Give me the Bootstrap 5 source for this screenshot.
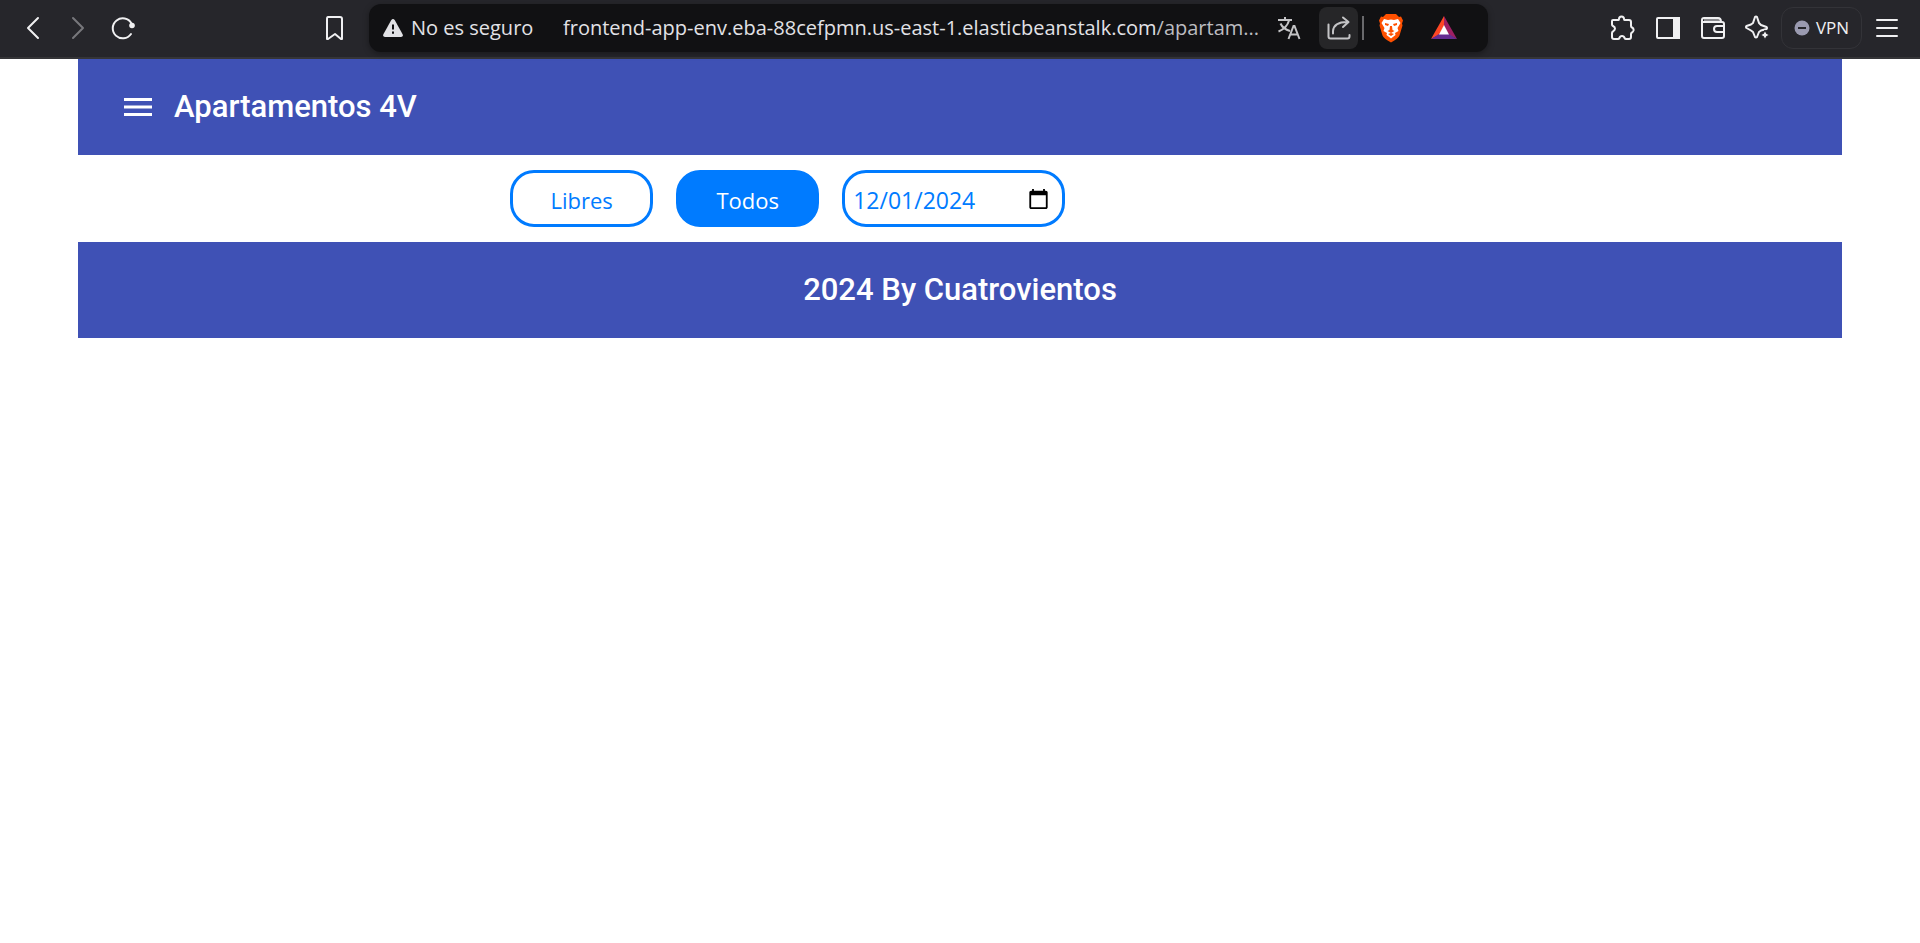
<!DOCTYPE html>
<html lang="es">
<head>
<meta charset="utf-8">
<meta name="viewport" content="width=device-width, initial-scale=1">
<title>Apartamentos 4V</title>
<link href="https://cdn.jsdelivr.net/npm/bootstrap@5.3.0/dist/css/bootstrap.min.css" rel="stylesheet">
<style>
  body { background: #fff; font-family: "Open Sans", "Noto Sans", sans-serif; }
  .browser-bar { height: 59px; padding: 0 11px 2px 10px; background: #26262b; border-bottom: 2px solid #353538; }
  .tool { width: 45px; height: 45px; padding: 0; border: 0; background: none; color: #f0f0f2; display: flex; align-items: center; justify-content: center; flex: none; }
  .tool:disabled { color: #77777c; }
  .tool svg, .address svg { display: block; flex: none; }
  .bookmark { margin-left: 167px; }
  .address { height: 48px; margin-left: 12px; margin-right: 112px; padding: 0 22px 0 14px; min-width: 0; border-radius: 12px; background: #111113; box-shadow: 0 2px 6px rgba(0, 0, 0, .35); color: #e2e2e6; font-size: 20px; }
  .security { width: 172px; padding: 0; border: 0; background: none; color: inherit; gap: 8px; white-space: nowrap; }
  .url-field { min-width: 0; height: 40px; margin-left: 8px; line-height: 40px; white-space: nowrap; overflow: hidden; }
  .url-field span { color: #bcbcc0; }
  .share { width: 39px; height: 42px; border-radius: 8px; background: #262628; color: #c4c4c6; }
  .divider { width: 2px; height: 24px; margin-left: 4px; background: #69696c; }
  .vpn { width: 81px; height: 42px; padding: 0; margin: 0 2px 0 1px; border: 1px solid #333338; border-radius: 12px; background: none; color: #f0f0f2; font-size: 17px; gap: 6px; }
  .app { margin: 0 78px; }
  .app-bar { height: 96px; padding: 0 24px; background: #3f51b5; color: #fff; font-family: Roboto, sans-serif; }
  .app-bar h1, .app-bar p { margin: 0; font-size: 31px; line-height: 48px; font-weight: 500; }
  .menu-toggle { width: 72px; height: 72px; }
  .filters { padding: 15px 0 15px 24.5%; gap: 23px; }
  .pill { height: 57px; border: 3px solid #007bff; border-radius: 24px; background: #fff; color: #007bff; font-size: 23px; line-height: 24px; }
  .choice { width: 143px; padding: 2px 0 0; font-size: 22px; }
  .choice.active { background: #007bff; color: #fff; }
  .day { width: 223px; padding: 2px 10px 0 8px; }
</style>
</head>
<body>
<header class="browser-bar d-flex align-items-center">
  <button class="tool" aria-label="Atrás"><svg width="24" height="24" fill="none" stroke="currentColor" stroke-width="2" stroke-linecap="round" stroke-linejoin="round"><path d="M17 2 7 12l10 10"/></svg></button>
  <button class="tool" aria-label="Adelante" disabled><svg width="24" height="24" fill="none" stroke="currentColor" stroke-width="2" stroke-linecap="round" stroke-linejoin="round"><path d="m7 2 10 10L7 22"/></svg></button>
  <button class="tool" aria-label="Recargar"><svg width="24" height="24" fill="none" stroke="currentColor" stroke-width="2" stroke-linecap="round"><path d="M20.500 7.500A10 10 0 1 0 20 18"/><circle cx="21" cy="9.500" r="2.800" fill="currentColor" stroke="none"/></svg></button>
  <button class="tool bookmark" aria-label="Marcador"><svg width="24" height="24" fill="none" stroke="currentColor" stroke-width="2" stroke-linejoin="round"><path d="M5 1h12q2 0 2 2v20h-1l-6-5-7 5H4V3q0-2 1-2z"/></svg></button>
  <div class="address d-flex align-items-center flex-grow-1">
    <button class="security d-flex align-items-center flex-shrink-0">
      <svg width="20" height="20" viewBox="0 0 20 20"><path d="M8.300 2q1.700-2 3.400 0l7.900 14.300q.9 2.400-1.600 2.700H2q-2.500-.3-1.600-2.700z" fill="#e2e2e6"/><path d="M9 6.500h2v5H9zm0 7h2v2.200H9z" fill="#111113"/></svg>
      No es seguro
    </button>
    <div class="url-field flex-grow-1">frontend-app-env.eba-88cefpmn.us-east-1.elasticbeanstalk.com<span>/apartam...</span></div>
    <button class="tool" aria-label="Traducir"><svg width="24" height="24" fill="none" stroke="#c4c4c6" stroke-width="2"><path d="M1 4h14M8 1v3M3.500 7.500Q6 13 13 15M12 4.500Q10 12 1.500 15.500M11.500 23l5-13h1l5 13M13.500 18.500h7"/></svg></button>
    <button class="tool share ms-2" aria-label="Compartir"><svg width="24" height="24" fill="none" stroke="currentColor" stroke-width="2" stroke-linecap="round" stroke-linejoin="round"><path d="M1.500 8.500v12q0 2 2 2h17q2 0 2-2v-1.500M6 17.500V15Q7 6 20 6M16 1.500 21.500 6 16 11"/></svg></button>
    <span class="divider flex-shrink-0"></span>
    <button class="tool ms-1" aria-label="Brave Shields"><svg width="26" height="30" viewBox="0 0 26 30"><path d="M8 1h10l3 3 2-.5 2 4-1 3 .5 2-3 10q-1 3-8.500 7-7.500-4-8.500-7l-3-10 .5-2-1-3 2-4 2 .5z" fill="#ff5000"/><path d="m6 6 4 1 3-.5 3 .5 4-1 2.500 4-3 5 1 3-3.500 2 .5 2-4.500 3.500L8.500 22l.5-2-3.500-2 1-3-3-5z" fill="#fff"/><path d="m7 10 4 1-1 2-3-1zm12 0-4 1 1 2 3-1zM12 13h2l.5 4 2 1-3.500 2-3.500-2 2-1zM10 21l3-1 3 1-3 2z" fill="#ff5000"/></svg></button>
    <button class="tool ms-2" aria-label="Brave Rewards"><svg width="28" height="26" viewBox="0 0 28 26"><path d="M14 1v10l-5 9-8 4z" fill="#ff4724"/><path d="M14 1v10l5 9 8 4z" fill="#9e1f63"/><path d="M1 24l8-5h10l8 5z" fill="#662d91"/><path d="m14 10 5 9.500H9z" fill="#fff"/></svg></button>
  </div>
  <button class="tool" aria-label="Extensiones"><svg width="25" height="25" viewBox="0 0 25 25" fill="none" stroke="currentColor" stroke-width="2" stroke-linejoin="round"><path d="M3 5h5.500q.5 0 .5-1 0-2.500 2.500-2.500T14 4q0 1 .5 1H19q2 0 2 2v4q0 1 1 1.500 2 1 1.500 3-.5 1.500-1.500 2-1 .5-1 1.500v3q0 2-2 2h-3q-1 0-1.500-1-.5-2-2.500-2t-2.500 2q-.5 1-1.500 1H4q-2 0-2-2v-4q0-1 1-1.500Q5 15 5 13.500T3 11q-1-.5-1-1.500V6q0-1 1-1z"/></svg></button>
  <button class="tool" aria-label="Panel lateral"><svg width="24" height="24" fill="none" stroke="currentColor" stroke-width="2"><rect x="1" y="2" width="22" height="20" rx="1"/><path d="M18 2h5v20h-5z" fill="currentColor"/></svg></button>
  <button class="tool" aria-label="Cartera"><svg width="24" height="24" fill="none" stroke="currentColor" stroke-width="2" stroke-linejoin="round"><path d="M3 4h16" stroke="#8a8a8e"/><path d="M20 6q0-4-3-4H3Q1 2 1 4v16q0 2 2 2h18q2 0 2-2V8q0-2-2-2H1M23 10h-7q-3 0-3 3t3 3h7"/></svg></button>
  <button class="tool" aria-label="Leo"><svg width="25" height="25" viewBox="0 0 25 25" fill="none" stroke="currentColor" stroke-width="2" stroke-linejoin="round"><path d="M10 2q1-1 2 0l2 6 2 2 5.500 2q1 1 0 2L16 15.500l-2 1.500-2 5q-1 1-2 0l-2-5-2-1.500L1.500 13q-1-1 0-2L6 9.500 8 8z"/><path d="m20 15 1.500 3.500L25 20l-3.500 1.500L20 25l-1.500-3.500L15 20l3.500-1.500z" fill="currentColor" stroke="#26262b" stroke-width="1"/></svg></button>
  <button class="vpn d-flex align-items-center justify-content-center flex-shrink-0"><svg width="16" height="16"><circle cx="8" cy="8" r="7.500" fill="#9a9ab0"/><path d="M4 8h8" stroke="#26262b" stroke-width="2"/></svg>VPN</button>
  <button class="tool" aria-label="Menú"><svg width="24" height="24" stroke="currentColor" stroke-width="2" stroke-linecap="round"><path d="M2 4h20M2 12h20M2 20h20"/></svg></button>
</header>
<div class="app">
  <nav class="app-bar d-flex align-items-center">
    <button class="tool menu-toggle text-white" aria-label="Abrir menú"><svg width="28" height="18" fill="currentColor"><path d="M0 0h28v3H0zm0 7.500h28v3H0zM0 15h28v3H0z"/></svg></button>
    <h1 class="text-nowrap">Apartamentos 4V</h1>
  </nav>
  <main class="filters d-flex flex-wrap">
    <button class="pill choice">Libres</button>
    <button class="pill choice active">Todos</button>
    <input class="pill day" type="date" value="2024-12-01" aria-label="Fecha">
  </main>
  <footer class="app-bar d-flex align-items-center justify-content-center"><p>2024 By Cuatrovientos</p></footer>
</div>
<script src="https://cdn.jsdelivr.net/npm/bootstrap@5.3.0/dist/js/bootstrap.bundle.min.js"></script>
</body>
</html>
